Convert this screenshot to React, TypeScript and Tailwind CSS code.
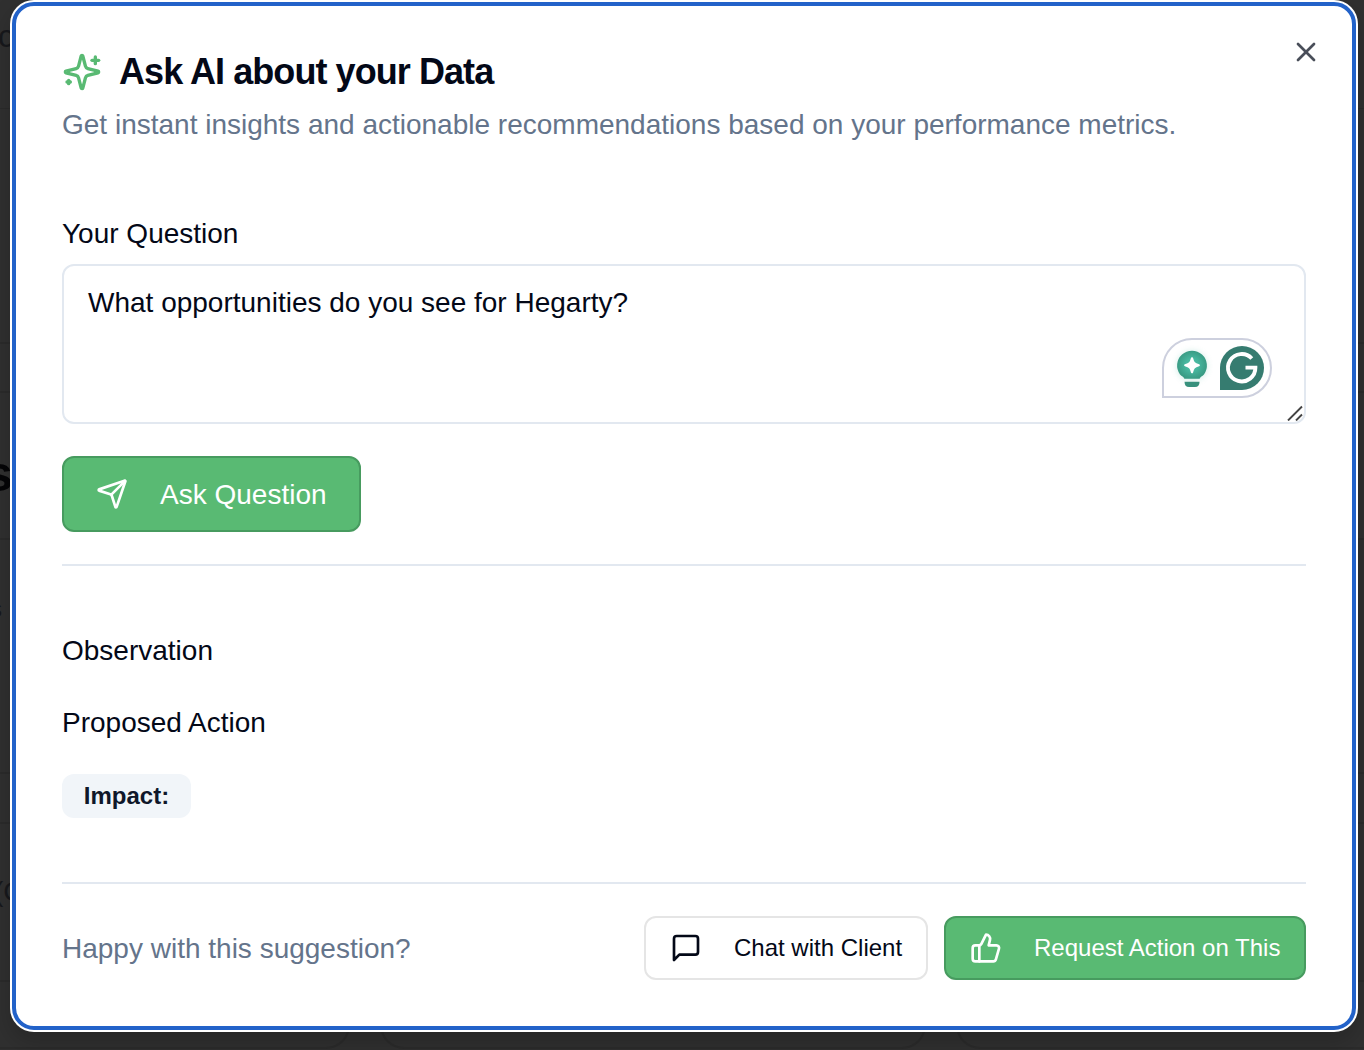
import React from "react";

type IconProps = { className?: string; children: React.ReactNode };

function Icon({ className, children }: IconProps) {
  return (
    <svg
      viewBox="0 0 24 24"
      fill="none"
      stroke="currentColor"
      strokeWidth="2"
      strokeLinecap="round"
      strokeLinejoin="round"
      className={className}
    >
      {children}
    </svg>
  );
}

function Sparkles() {
  return (
    <Icon className="size-10 shrink-0 text-[#59ba73]">
      <path d="M9.937 15.5A2 2 0 0 0 8.5 14.063l-6.135-1.582a.5.5 0 0 1 0-.962L8.5 9.936A2 2 0 0 0 9.937 8.5l1.582-6.135a.5.5 0 0 1 .963 0L14.063 8.5A2 2 0 0 0 15.5 9.937l6.135 1.581a.5.5 0 0 1 0 .964L15.5 14.063a2 2 0 0 0-1.437 1.437l-1.582 6.135a.5.5 0 0 1-.963 0z" />
      <path d="M20 3v4" />
      <path d="M22 5h-4" />
      <path d="M4 17v2" />
      <path d="M5 18H3" />
    </Icon>
  );
}

function WritingAssistant() {
  return (
    <div className="absolute right-8 bottom-6 flex h-[60px] w-[110px] items-center rounded-[30px] rounded-bl-none border-2 border-[#cdd0de] bg-white">
      <svg viewBox="0 0 106 56" className="h-14 w-[106px]">
        <defs>
          <radialGradient id="bulb" cx="0.5" cy="0.5" r="0.5">
            <stop offset="0.4" stopColor="#48b8a0" />
            <stop offset="1" stopColor="#399b84" />
          </radialGradient>
          <filter id="glow" x="-50%" y="-50%" width="200%" height="200%">
            <feGaussianBlur stdDeviation="3" />
          </filter>
        </defs>
        <circle cx="28" cy="26" r="15" fill="#48b8a0" opacity="0.25" filter="url(#glow)" />
        <path d="M20.400 38.800C19.700 36.800 17.800 36.200 16 34.400A14.900 14.900 0 1 1 40 34.400C38.200 36.200 36.300 36.800 35.600 38.800z" fill="url(#bulb)" />
        <path d="M20.500 41.700h15c0 3.300-1.500 5.300-4.500 5.300h-6c-3 0-4.500-2-4.500-5.300z" fill="#38917d" />
        <path
          d="M28 18.300c1.200 4.600 2.200 5.600 6.800 6.900-4.600 1.300-5.600 2.300-6.800 6.900-1.200-4.600-2.200-5.600-6.800-6.900 4.600-1.300 5.600-2.300 6.800-6.900z"
          fill="#fff"
          stroke="#fff"
          strokeWidth="2.200"
          strokeLinejoin="round"
        />
        <path d="M56 50V28a22 22 0 1 1 22 22z" fill="#367c70" />
        <path d="M87.800 18.500A13.700 13.700 0 1 0 91.400 27.600H81.500" fill="none" stroke="#fff" strokeWidth="3.900" />
      </svg>
    </div>
  );
}

function Backdrop() {
  return (
    <div className="absolute inset-0 overflow-hidden bg-[#303030] text-[28px] leading-none text-[#17181c]">
      <div className="absolute top-[108px] h-px w-full bg-[#2b2b2b]" />
      <div className="absolute top-[342px] h-[51px] w-full border-y-2 border-[#2b2b2b]" />
      <div className="absolute top-[538px] h-0.5 w-full bg-[#2b2b2b]" />
      <div className="absolute top-[772px] h-[52px] w-full border-y-2 border-[#2b2b2b]" />
      <span className="absolute top-[20px] -left-[2px] text-[32px]">c</span>
      <span className="absolute top-[449px] -left-[15px] text-[50px] font-bold text-[#050507]">s</span>
      <span className="absolute top-[597px] -left-[10px] text-[24px]">s</span>
      <span className="absolute top-[878px] -left-[6px] text-[28px]">(C</span>
      <div className="absolute top-[980px] -left-10 h-[69px] w-[390px] rounded-[24px] border-2 border-[#2b2b2b]" />
      <div className="absolute top-[980px] left-[380px] h-[69px] w-[546px] rounded-[24px] border-2 border-[#2b2b2b]" />
      <div className="absolute top-[980px] left-[956px] h-[69px] w-[500px] rounded-[24px] border-2 border-[#2b2b2b]" />
    </div>
  );
}

export default function App() {
  return (
    <div className="relative h-[1050px] w-[1364px] overflow-hidden font-['Liberation_Sans',Arial,sans-serif] text-[#030817]">
      <Backdrop />
      <div className="relative ml-[10px] h-[1032px] w-[1348px] rounded-[24px] bg-white p-0.5 shadow-[0_10px_24px_rgba(0,0,0,0.2)]">
        <main className="relative flex h-full flex-col rounded-[22px] border-4 border-[#2262c9] px-[46px] pt-[46px]">
          <button aria-label="Close" className="absolute top-[30px] right-[30px] text-[#494e59]">
            <Icon className="size-8">
              <path d="M18 6 6 18" />
              <path d="m6 6 12 12" />
            </Icon>
          </button>

          <header>
            <div className="flex h-10 items-center gap-[17px]">
              <Sparkles />
              <h1 className="text-[36px] leading-10 font-bold tracking-[-0.93px] whitespace-nowrap">Ask AI about your Data</h1>
            </div>
            <p className="mt-[13px] text-[28px] leading-10 whitespace-nowrap text-[#64748b]">
              Get instant insights and actionable recommendations based on your performance metrics.
            </p>
          </header>

          <section className="mt-[69px] flex flex-col items-start">
            <label className="text-[28px] leading-10 whitespace-nowrap">Your Question</label>
            <div className="relative mt-2.5 h-40 w-full rounded-xl border-2 border-[#e2e8f0] px-6 pt-[17px] text-[28px] leading-10">
              What opportunities do you see for Hegarty?
              <WritingAssistant />
              <svg viewBox="0 0 16 16" className="absolute right-px bottom-px size-4" stroke="#444" strokeWidth="1.900">
                <path d="M1 15.500 15 1.500M9 15.500l6-6" />
              </svg>
            </div>
            <button className="mt-8 flex h-[76px] w-[299px] items-center rounded-xl border-2 border-[#479b5f] bg-[#59ba73] pl-8 text-[28px] text-white">
              <Icon className="size-8">
                <path d="M14.536 21.686a.5.5 0 0 0 .937-.024l6.5-19a.496.496 0 0 0-.635-.635l-19 6.500a.5.5 0 0 0-.024.937l8.400 2.700a2 2 0 0 1 1.150 1.150z" />
                <path d="M21.854 2.147 11.500 12.500" />
              </Icon>
              <span className="ml-8 pt-0.5 whitespace-nowrap">Ask Question</span>
            </button>
          </section>

          <section className="mt-8 flex flex-col items-start border-t-2 border-[#e2e8f0] pt-[65px] text-[28px] leading-10">
            <h2>Observation</h2>
            <h2 className="mt-8">Proposed Action</h2>
            <span className="mt-[31px] flex h-11 w-[129px] items-center justify-center rounded-xl bg-[#f1f5f9] text-[24px] leading-8 font-bold text-[#0f172a]">
              Impact:
            </span>
          </section>

          <footer className="mt-16 flex items-center border-t-2 border-[#e2e8f0] pt-8">
            <p className="flex-1 pt-0.5 text-[28px] leading-10 whitespace-nowrap text-[#64748b]">Happy with this suggestion?</p>
            <button className="flex h-16 w-[284px] items-center rounded-xl border-2 border-[#e5e5e5] pl-6 text-[24px]">
              <Icon className="size-8">
                <path d="M21 15a2 2 0 0 1-2 2H7l-4 4V5a2 2 0 0 1 2-2h14a2 2 0 0 1 2 2z" />
              </Icon>
              <span className="ml-8 whitespace-nowrap">Chat with Client</span>
            </button>
            <button className="ml-4 flex h-16 w-[362px] items-center rounded-xl border-2 border-[#479b5f] bg-[#59ba73] pl-6 text-[24px] text-white">
              <Icon className="size-8">
                <path d="M7 10v12" />
                <path d="M15 5.88 14 10h5.83a2 2 0 0 1 1.92 2.56l-2.33 8A2 2 0 0 1 17.5 22H4a2 2 0 0 1-2-2v-8a2 2 0 0 1 2-2h2.76a2 2 0 0 0 1.79-1.11L12 2a3.13 3.13 0 0 1 3 3.88Z" />
              </Icon>
              <span className="ml-8 whitespace-nowrap">Request Action on This</span>
            </button>
          </footer>
        </main>
      </div>
    </div>
  );
}
